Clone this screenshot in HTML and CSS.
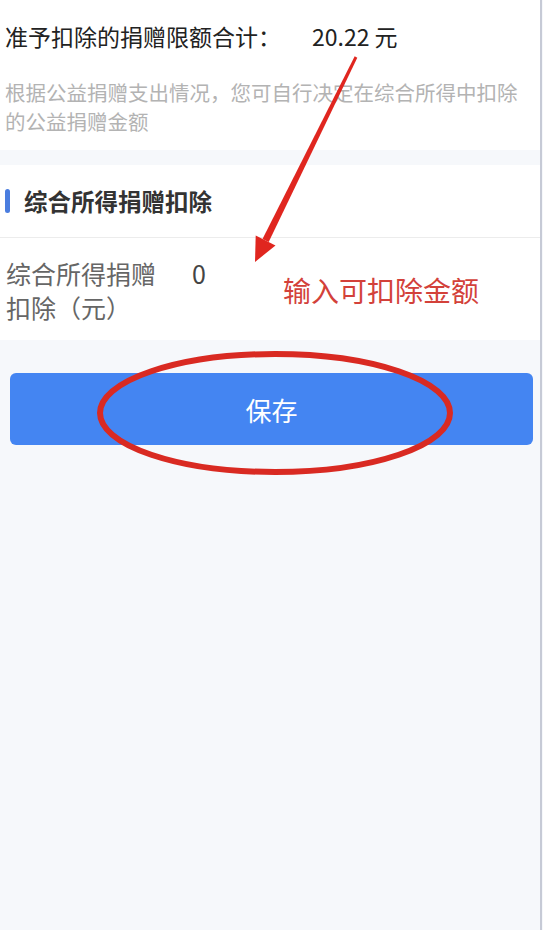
FILE: index.html
```html
<!DOCTYPE html>
<html lang="zh-CN">
<head>
<meta charset="utf-8">
<title>综合所得捐赠扣除</title>
<link rel="stylesheet" href="styles.css">
</head>
<body>
<div class="page">
  <section class="summary">
    <div class="total">
      <span class="total-label">准予扣除的捐赠限额合计：</span>
      <span class="total-amount">20.22 元</span>
    </div>
    <p class="desc">根据公益捐赠支出情况，您可自行决定在综合所得中扣除的公益捐赠金额</p>
  </section>

  <section class="card">
    <div class="card-head">
      <span class="bar"></span>
      <span class="card-title">综合所得捐赠扣除</span>
    </div>
    <div class="row">
      <span class="row-label">综合所得捐赠扣除（元）</span>
      <span class="row-value">0</span>
      <span class="note">输入可扣除金额</span>
    </div>
  </section>

  <button class="save" type="button">保存</button>

  <svg class="marks" width="543" height="930" viewBox="0 0 543 930" aria-hidden="true">
    <polygon class="arrow" points="357.3,57.7 354.7,56.3 262.5,239.0 268.7,242.0"/>
    <polygon class="arrow" points="255,262 255.7,235.6 275.5,245.4"/>
    <ellipse class="ring" cx="275" cy="413" rx="175" ry="59"/>
  </svg>
</div>
</body>
</html>
```

FILE: styles.css
```css
html, body {
  margin: 0;
  padding: 0;
}

body {
  background: #f6f8fb;
  font-family: "Noto Sans CJK SC", "Noto Sans", sans-serif;
}

.page {
  position: relative;
  width: 540px;
  min-height: 930px;
  border-right: 2px solid #c6cad6;
  box-sizing: content-box;
  background: #f6f8fb;
}

.summary {
  background: #ffffff;
  padding: 20px 10px 14px 5px;
}

.total {
  display: flex;
  align-items: center;
  font-size: 23px;
  line-height: 32px;
  color: #222222;
}

.total-amount {
  margin-left: 31px;
}

.desc {
  margin: 26px 0 0 0;
  font-size: 20.5px;
  line-height: 29px;
  color: #b3b3b3;
}

.card {
  margin-top: 15px;
  background: #ffffff;
}

.card-head {
  display: flex;
  align-items: center;
  height: 72px;
  border-bottom: 1px solid #ececec;
  padding-left: 5px;
}

.bar {
  width: 5px;
  height: 24px;
  border-radius: 3px;
  background: #4a7ddf;
}

.card-title {
  margin-left: 14px;
  font-size: 23.5px;
  font-weight: bold;
  color: #333333;
}

.row {
  display: flex;
  align-items: flex-start;
  padding: 18px 0 16px 6px;
}

.row-label {
  width: 160px;
  font-size: 25px;
  line-height: 34px;
  color: #666666;
}

.row-value {
  width: 91px;
  margin-left: 26px;
  font-size: 25px;
  line-height: 34px;
  color: #444444;
}

.note {
  align-self: center;
  font-size: 28px;
  line-height: 36px;
  color: #d3413a;
}

.save {
  display: block;
  width: 523px;
  height: 72px;
  margin: 33px 0 0 10px;
  border: none;
  border-radius: 6px;
  background: #4485f2;
  color: #ffffff;
  font-family: "Noto Sans CJK SC", "Noto Sans", sans-serif;
  font-size: 26px;
}

.marks {
  position: absolute;
  left: 0;
  top: 0;
  pointer-events: none;
}

.arrow {
  fill: #e0261f;
}

.ring {
  fill: none;
  stroke: #d92a22;
  stroke-width: 6;
}
```
